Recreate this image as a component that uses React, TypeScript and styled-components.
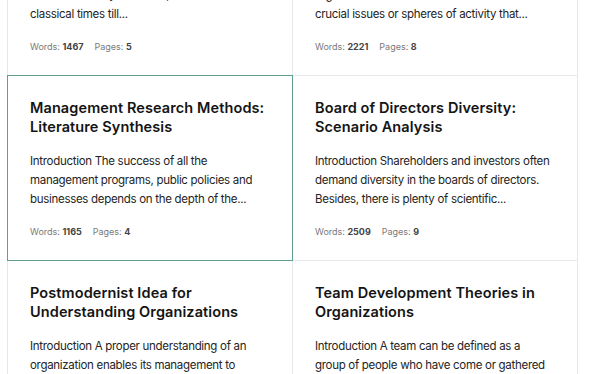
import React from 'react';
import styled, { createGlobalStyle } from 'styled-components';

interface Paper {
  title: string;
  excerpt: string;
  words: number;
  pages: number;
}

const papers: Paper[] = [
  {
    title: 'Evolution of Management Thought: History Overview',
    excerpt:
      'Introduction Management as a practice has existed for many centuries, ever since the classical times till...',
    words: 1467,
    pages: 5,
  },
  {
    title: 'Strategic Planning in Public Organizations',
    excerpt:
      'Introduction Strategic planning helps public organizations to focus their attention on the crucial issues or spheres of activity that...',
    words: 2221,
    pages: 8,
  },
  {
    title: 'Management Research Methods: Literature Synthesis',
    excerpt:
      'Introduction The success of all the management programs, public policies and businesses depends on the depth of the...',
    words: 1165,
    pages: 4,
  },
  {
    title: 'Board of Directors Diversity: Scenario Analysis',
    excerpt:
      'Introduction Shareholders and investors often demand diversity in the boards of directors. Besides, there is plenty of scientific...',
    words: 2509,
    pages: 9,
  },
  {
    title: 'Postmodernist Idea for Understanding Organizations',
    excerpt:
      'Introduction A proper understanding of an organization enables its management to formulate decisions...',
    words: 1780,
    pages: 6,
  },
  {
    title: 'Team Development Theories in Organizations',
    excerpt:
      'Introduction A team can be defined as a group of people who have come or gathered together...',
    words: 1932,
    pages: 7,
  },
];

const GlobalStyle = createGlobalStyle`
  body {
    margin: 0;
    background: #ffffff;
    font-family: Inter, "Liberation Sans", sans-serif;
  }
`;

const Viewport = styled.div`
  height: 374px;
  overflow: hidden;
  padding-left: 7px;
`;

const Grid = styled.div`
  display: grid;
  grid-template-columns: repeat(2, 285px);
  grid-auto-rows: 185px;
  margin-top: -110px;
`;

const Card = styled.article<{ $active?: boolean }>`
  position: relative;
  z-index: ${(p) => (p.$active ? 1 : 0)};
  margin: 0 -1px -1px 0;
  padding: 22px 26px 0 22px;
  border: 1px solid ${(p) => (p.$active ? '#5f9f90' : '#e2e8eb')};
  background: #ffffff;
  display: flex;
  flex-direction: column;
`;

const Title = styled.h3`
  margin: 0;
  font-family: Inter, "DejaVu Sans", sans-serif;
  font-size: 14.5px;
  font-weight: 600;
  line-height: 19px;
  color: #141414;
  letter-spacing: 0.1px;
`;

const Excerpt = styled.p`
  margin: 16px 0 0 0;
  font-size: 11.5px;
  letter-spacing: -0.3px;
  line-height: 19px;
  color: #242424;
`;

const Meta = styled.div`
  margin-top: 17px;
  display: flex;
  gap: 11px;
  font-size: 9px;
  line-height: 12px;
  color: #7a7a7a;

  b {
    color: #444444;
    font-weight: 700;
  }
`;

const PaperCard: React.FC<{ paper: Paper; active?: boolean }> = ({ paper, active }) => (
  <Card $active={active}>
    <Title>{paper.title}</Title>
    <Excerpt>{paper.excerpt}</Excerpt>
    <Meta>
      <span>
        Words: <b>{paper.words}</b>
      </span>
      <span>
        Pages: <b>{paper.pages}</b>
      </span>
    </Meta>
  </Card>
);

export default function App() {
  return (
    <>
      <GlobalStyle />
      <Viewport>
        <Grid>
          {papers.map((p, i) => (
            <PaperCard key={p.title} paper={p} active={i === 2} />
          ))}
        </Grid>
      </Viewport>
    </>
  );
}
